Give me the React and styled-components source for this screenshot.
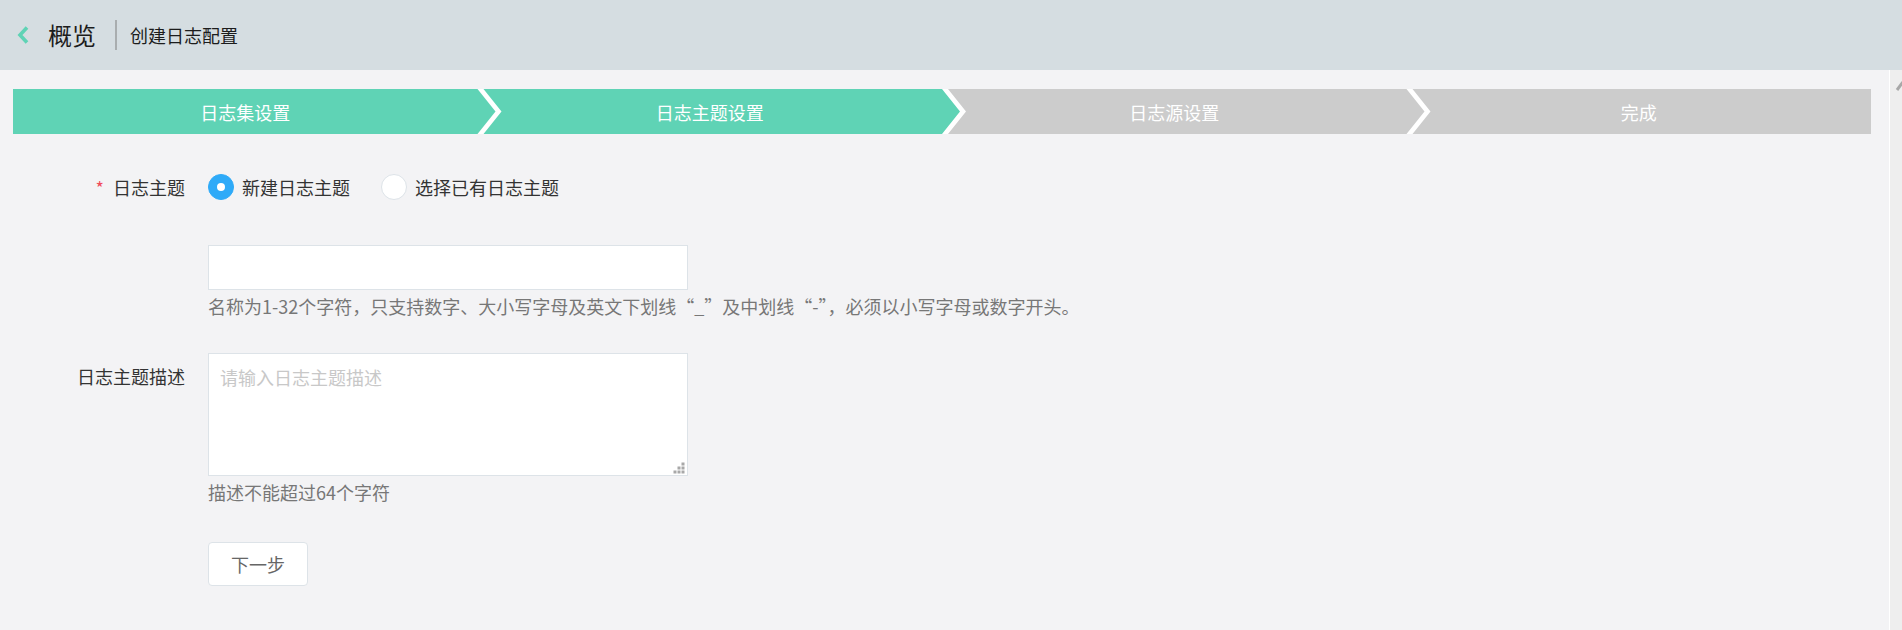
import React from "react";
import styled, { createGlobalStyle } from "styled-components";

const GlobalStyle = createGlobalStyle`
  html, body {
    margin: 0;
    padding: 0;
    background: #f3f3f5;
    overflow: hidden;
  }
  body {
    font-family: "Noto Sans CJK SC", "Noto Sans", sans-serif;
    color: #333;
  }
  * {
    box-sizing: border-box;
  }
`;

const Page = styled.div`
  width: 1902px;
  height: 630px;
  display: flex;
  flex-direction: column;
`;

/** Header */
const Header = styled.header`
  height: 70px;
  flex-shrink: 0;
  background: #d5dde1;
  display: flex;
  align-items: center;
  padding-left: 16px;
`;

const Back = styled.a`
  display: flex;
  align-items: center;
  width: 16px;
  height: 20px;
  margin-right: 16px;
`;

const Title = styled.h1`
  margin: 0;
  font-size: 24px;
  font-weight: 400;
  color: #1c1c1c;
  line-height: 30px;
`;

const Divider = styled.span`
  width: 2px;
  height: 30px;
  background: #a9adaf;
  margin: 0 13px 0 19px;
`;

const SubTitle = styled.span`
  font-size: 18px;
  color: #1c1c1c;
  line-height: 30px;
`;

/** Body */
const Body = styled.div`
  flex: 1;
  display: flex;
  min-height: 0;
`;

const Main = styled.main`
  flex: 1;
  padding: 19px 18px 0 13px;
`;

const ScrollTrack = styled.div`
  width: 13px;
  flex-shrink: 0;
  border-left: 1px solid #ffffff;
  background: #eeeeee;
  overflow: hidden;
`;

/** Steps */
const Steps = styled.div`
  display: flex;
  height: 45px;
  background: #ffffff;
`;

const ARROW = 18;
const GAP = 6;

const Step = styled.div`
  flex-shrink: 0;
  height: 45px;
  width: ${(p) => (p.$last ? "25%" : `calc(25% + ${ARROW}px)`)};
  margin-right: ${(p) => (p.$last ? 0 : -ARROW)}px;
  padding-right: ${(p) => (p.$last ? 0 : ARROW)}px;
  background: ${(p) => (p.$done ? "#5fd3b5" : "#cccccc")};
  color: #ffffff;
  font-size: 18px;
  display: flex;
  align-items: center;
  justify-content: center;
  clip-path: ${(p) => {
    const left = p.$first ? "0 0" : `${GAP}px 0`;
    const leftEnd = p.$first
      ? "0 100%"
      : `${GAP}px 100%, ${GAP + ARROW}px 50%`;
    const right = p.$last
      ? "100% 0, 100% 100%"
      : `calc(100% - ${ARROW}px) 0, 100% 50%, calc(100% - ${ARROW}px) 100%`;
    return `polygon(${left}, ${right}, ${leftEnd})`;
  }};
`;

/** Form */
const Form = styled.form`
  display: flex;
  flex-direction: column;
`;

const Row = styled.div`
  display: flex;
  align-items: ${(p) => (p.$top ? "flex-start" : "center")};
  margin-top: ${(p) => p.$mt || 0}px;
`;

const Label = styled.label`
  width: 172px;
  margin-right: 23px;
  text-align: right;
  font-size: 18px;
  line-height: 26px;
  color: #333;
  padding-top: ${(p) => p.$pt || 0}px;
  flex-shrink: 0;
  white-space: nowrap;
`;

const Star = styled.span`
  color: #f04a5a;
  margin-right: 9px;
`;

const Field = styled.div`
  display: flex;
  flex-direction: column;
`;

const RadioGroup = styled.div`
  display: flex;
  align-items: center;
  gap: 31px;
`;

const RadioItem = styled.label`
  display: flex;
  align-items: center;
  gap: 8px;
  font-size: 18px;
  line-height: 26px;
  color: #333;
`;

const RadioDot = styled.span`
  width: 26px;
  height: 26px;
  border-radius: 50%;
  background: ${(p) => (p.$checked ? "#2eaaf8" : "#ffffff")};
  border: 1px solid ${(p) => (p.$checked ? "#2eaaf8" : "#dde3e8")};
  display: flex;
  align-items: center;
  justify-content: center;

  &::after {
    content: "";
    width: 8px;
    height: 8px;
    border-radius: 50%;
    background: #ffffff;
    display: ${(p) => (p.$checked ? "block" : "none")};
  }
`;

const Input = styled.input`
  width: 480px;
  height: 45px;
  border: 1px solid #dde3e8;
  background: #ffffff;
  outline: none;
  padding: 0 11px;
  font-family: inherit;
  font-size: 18px;
`;

const Hint = styled.div`
  margin-top: 3px;
  font-size: 18px;
  line-height: 26px;
  color: #777777;
  white-space: nowrap;
`;

const Wide = styled.span`
  font-feature-settings: "fwid";
`;

const AreaWrap = styled.div`
  position: relative;
  width: 480px;
  height: 123px;
`;

const TextArea = styled.textarea`
  display: block;
  width: 100%;
  height: 100%;
  resize: none;
  border: 1px solid #dde3e8;
  background: #ffffff;
  outline: none;
  padding: 10px 11px;
  font-family: inherit;
  font-size: 18px;
  line-height: 26px;
  color: #333;

  &::placeholder {
    color: #c8c8c8;
  }
`;

const Grip = styled.svg`
  position: absolute;
  right: 3px;
  bottom: 2px;
`;

const Button = styled.button`
  width: 100px;
  height: 44px;
  border: 1px solid #dde3e8;
  border-radius: 4px;
  background: #ffffff;
  font-family: inherit;
  font-size: 18px;
  color: #666666;
  cursor: pointer;
`;

const steps = [
  { name: "日志集设置", done: true },
  { name: "日志主题设置", done: true },
  { name: "日志源设置", done: false },
  { name: "完成", done: false },
];

export default function App() {
  return (
    <Page>
      <GlobalStyle />
      <Header>
        <Back href="#">
          <svg width="14" height="20" viewBox="0 0 14 20">
            <polyline
              points="11,2.5 4,10 11,17.5"
              fill="none"
              stroke="#5fd3b5"
              strokeWidth="3.6"
            />
          </svg>
        </Back>
        <Title>概览</Title>
        <Divider />
        <SubTitle>创建日志配置</SubTitle>
      </Header>
      <Body>
        <Main>
          <Steps>
            {steps.map((s, i) => (
              <Step
                key={s.name}
                $first={i === 0}
                $last={i === steps.length - 1}
                $done={s.done}
              >
                {s.name}
              </Step>
            ))}
          </Steps>
          <Form onSubmit={(e) => e.preventDefault()}>
            <Row $mt={40}>
              <Label>
                <Star>*</Star>日志主题
              </Label>
              <RadioGroup>
                <RadioItem>
                  <RadioDot $checked />
                  新建日志主题
                </RadioItem>
                <RadioItem>
                  <RadioDot />
                  选择已有日志主题
                </RadioItem>
              </RadioGroup>
            </Row>
            <Row $mt={45} $top>
              <Label />
              <Field>
                <Input type="text" />
                <Hint>
                  名称为1-32个字符，只支持数字、大小写字母及英文下划线
                  <Wide>“</Wide>_<Wide>”</Wide>及中划线<Wide>“</Wide>-
                  <Wide>”</Wide>，必须以小写字母或数字开头。
                </Hint>
              </Field>
            </Row>
            <Row $mt={34} $top>
              <Label $pt={10}>日志主题描述</Label>
              <Field>
                <AreaWrap>
                  <TextArea placeholder="请输入日志主题描述" />
                  <Grip width="12" height="12" viewBox="0 0 12 12">
                    <g fill="#a8a8a8">
                      <rect x="8.5" y="0.5" width="3" height="3" />
                      <rect x="4.5" y="4.5" width="3" height="3" />
                      <rect x="8.5" y="4.5" width="3" height="3" />
                      <rect x="0.5" y="8.5" width="3" height="3" />
                      <rect x="4.5" y="8.5" width="3" height="3" />
                      <rect x="8.5" y="8.5" width="3" height="3" />
                    </g>
                  </Grip>
                </AreaWrap>
                <Hint>描述不能超过64个字符</Hint>
              </Field>
            </Row>
            <Row $mt={37}>
              <Label />
              <Button type="submit">下一步</Button>
            </Row>
          </Form>
        </Main>
        <ScrollTrack>
          <svg width="12" height="24" viewBox="0 0 12 24">
            <line
              x1="7"
              y1="20"
              x2="13"
              y2="12"
              stroke="#a8a8a8"
              strokeWidth="3"
            />
          </svg>
        </ScrollTrack>
      </Body>
    </Page>
  );
}
